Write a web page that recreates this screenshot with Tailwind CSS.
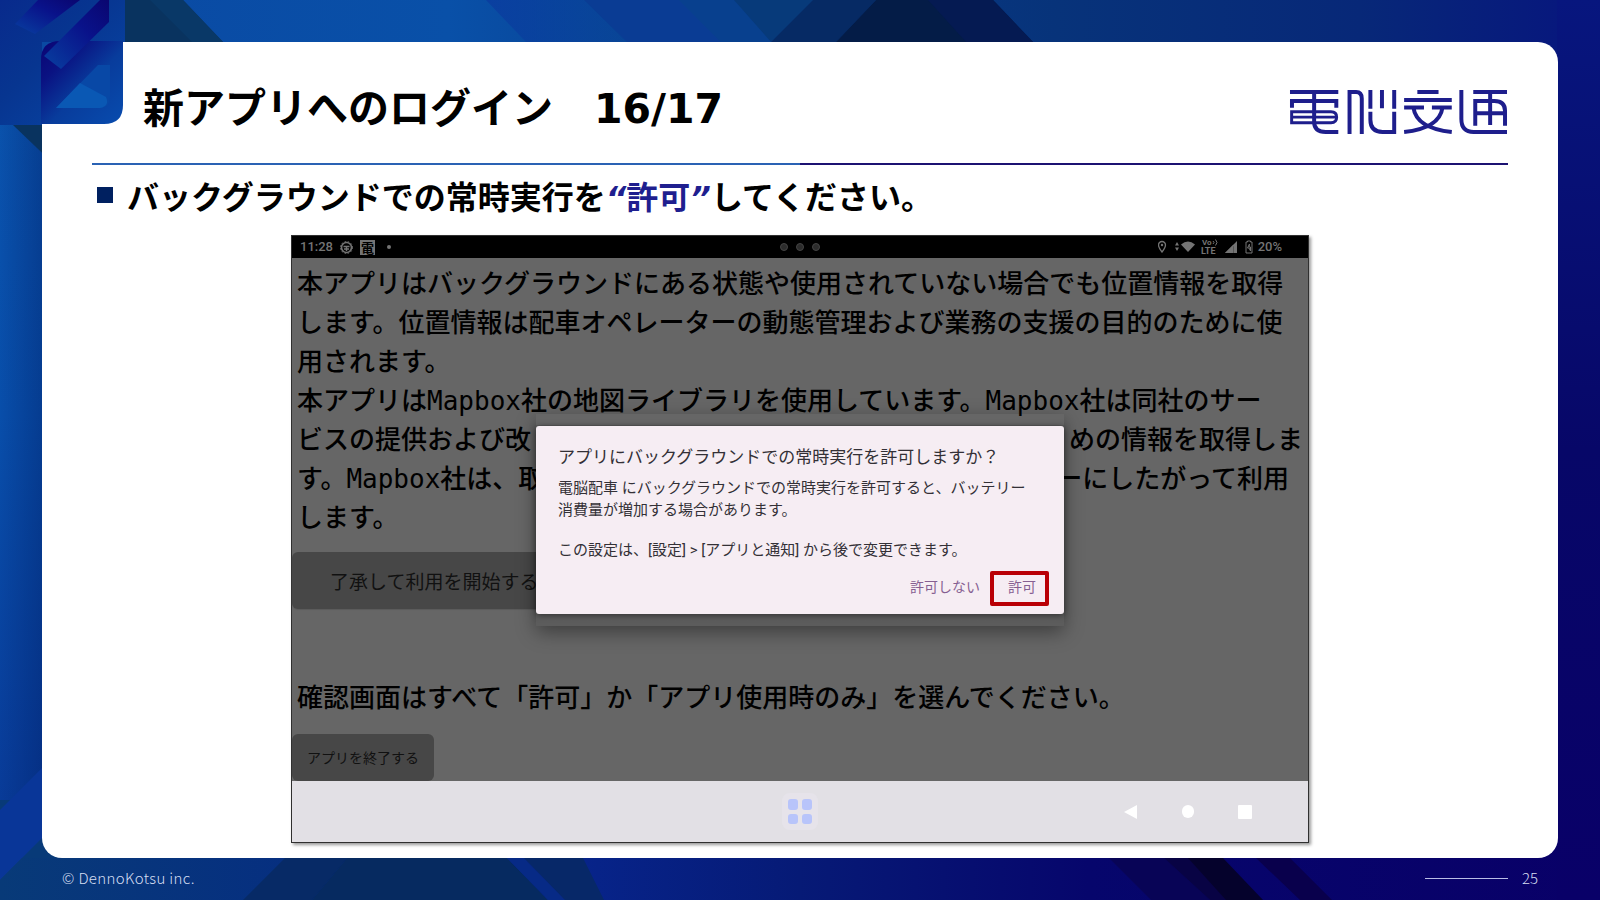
<!DOCTYPE html>
<html lang="ja">
<head>
<meta charset="UTF-8"/>
<meta name="viewport" content="width=device-width, initial-scale=1"/>
<title>新アプリへのログイン 16/17</title>
<script src="https://cdn.jsdelivr.net/npm/@tailwindcss/browser@4"></script>
</head>
<body class="relative isolate flex min-h-screen flex-col bg-[#07247c] font-['Noto_Sans_CJK_JP',sans-serif] text-black">

<!-- backdrop -->
<svg class="absolute inset-0 -z-10 h-full w-full" viewBox="0 0 1600 900" preserveAspectRatio="none" aria-hidden="true">
  <defs>
    <linearGradient id="top" x1="0" x2="1"><stop offset="0" stop-color="#0a48a2"/><stop offset=".28" stop-color="#0950a8"/><stop offset=".5" stop-color="#083a85"/><stop offset=".66" stop-color="#07337a"/><stop offset=".85" stop-color="#072878"/><stop offset="1" stop-color="#07157e"/></linearGradient>
    <linearGradient id="left" x1="0" x2="0" y1="0" y2="1"><stop offset="0" stop-color="#0a52ac"/><stop offset=".45" stop-color="#084eaa"/><stop offset="1" stop-color="#083b98"/></linearGradient>
    <linearGradient id="right" x1="0" x2="0" y1="0" y2="1"><stop offset="0" stop-color="#07167e"/><stop offset=".5" stop-color="#070768"/><stop offset="1" stop-color="#090068"/></linearGradient>
    <linearGradient id="bottom" x1="0" x2="1"><stop offset="0" stop-color="#083a78"/><stop offset=".17" stop-color="#06307f"/><stop offset=".36" stop-color="#07248a"/><stop offset=".5" stop-color="#061a76"/><stop offset=".68" stop-color="#06066c"/><stop offset="1" stop-color="#090068"/></linearGradient>
    <linearGradient id="band" x1="0" x2="1"><stop offset="0" stop-color="#0a3fa0"/><stop offset="1" stop-color="#083a98" stop-opacity="0"/></linearGradient>
    <linearGradient id="side" x1="0" x2="1"><stop offset="0" stop-color="#001a60" stop-opacity="0"/><stop offset="1" stop-color="#001a60" stop-opacity=".35"/></linearGradient>
    <linearGradient id="teal" x1="0" x2="1"><stop offset="0" stop-color="#083a78"/><stop offset="1" stop-color="#062f80"/></linearGradient>
  </defs>
  <rect width="1600" height="450" fill="url(#top)"/>
  <rect y="450" width="1600" height="450" fill="url(#bottom)"/>
  <rect y="100" width="300" height="700" fill="url(#left)"/>
  <rect x="1557" width="43" height="900" fill="url(#right)"/>
  <!-- top edge facets -->
  <path d="M125 0H183L223 42H125Z" fill="#09335f"/>
  <path d="M150 0H183L223 42H192Z" fill="#093867"/>
  <path d="M486 0H584L627 42H526Z" fill="url(#band)"/>
  <path d="M584 0H679L721 42H627Z" fill="#0a3c94"/>
  <path d="M679 0H734L777 42H721Z" fill="#08408e"/>
  <path d="M734 0H813L771 42Z" fill="#073a7a"/>
  <path d="M813 0H876L836 42H771Z" fill="#062a64"/>
  <path d="M876 0H993L1033 42H836Z" fill="#041c47"/>
  <path d="M928 0H993L1033 42H966Z" fill="#051a52"/>
  <!-- left edge facets -->
  <rect x="0" y="100" width="42" height="700" fill="url(#side)"/>
  <path d="M13 125H60V170Z" fill="#09335f"/>
  <path d="M0 810L60 750V900H0Z" fill="#093698"/>
  <path d="M0 880L60 820V900H0Z" fill="#083a78"/>
  <!-- bottom edge facets -->
  <path d="M0 880L22 858H285L243 900H0Z" fill="url(#teal)"/>
  <path d="M285 858H347L312 900H243Z" fill="#072a66"/>
  <path d="M347 858H507L548 900H312Z" fill="#062a60"/>
  <path d="M507 858H524L565 900H548Z" fill="#072a86"/>
  <path d="M524 858H583L604 900H565Z" fill="#072868"/>
  <path d="M1109 858H1164L1210 900H1151Z" fill="#080456"/>
  <path d="M1164 858H1193L1231 900H1210Z" fill="#080344"/>
  <path d="M1188 858H1223L1263 900H1226Z" fill="#05022c"/>
  <path d="M1256 858H1290L1332 900H1300Z" fill="#09004c"/>
</svg>

<!-- slide -->
<main class="relative mx-[42px] mt-[42px] grow rounded-[20px] bg-white px-[50px] pb-[15px]">
  <header class="flex items-end justify-between pt-[42px] pb-[29px] pl-[51px]">
    <h1 class="text-[41px] leading-[50px] font-bold font-['DejaVu_Sans','Noto_Sans_CJK_JP',sans-serif]">新アプリへのログイン　16/17</h1>
    <svg class="h-11 w-[219px]" viewBox="0 0 656 133" fill="none" stroke="#1e1e8c" stroke-width="12" role="img" aria-label="電脳交通">
      <path d="M0 6H146M6 54V33H140V54M73 0V96Q73 127 108 127H146"/>
      <path d="M5 66H124Q141 66 141 82T124 99H5ZM5 82H138" stroke-width="9"/>
      <path d="M180 133V6H200Q217 6 217 26V133M243 0V57M278 0V55M315 0V57M243 66V90Q243 127 280 127H315V66"/>
      <path d="M385 6H449M345 30H489M345 53H405M429 53H489M373 53Q382 116 489 127M461 53Q452 116 345 127"/>
      <path d="M518 0V88Q518 127 555 127H656M554 6H656M560 108V33H618Q650 33 650 63V108M605 6V106M560 70H650"/>
    </svg>
  </header>
  <div class="h-[2px] bg-linear-to-r from-[#2a62b4] from-50% to-[#1c1272] to-50%"></div>

  <ul class="pt-[6px] pb-4">
    <li class="flex h-12 items-center gap-[14px] pl-[5px] text-[32px] leading-[48px] font-bold">
      <span class="size-4 bg-[#002060]"></span>
      <span>バックグラウンドでの常時実行を<em class="text-[#1f1f8f] not-italic"><i class="font-['DejaVu_Sans',sans-serif] leading-none">“</i>許可<i class="font-['DejaVu_Sans',sans-serif] leading-none">”</i></em>してください。</span>
    </li>
  </ul>

  <!-- tablet screen -->
  <section class="relative mx-auto max-w-[1018px] border border-[#303030] bg-[#666] shadow-[2px_2px_3px_rgba(0,0,0,0.4)]">
    <div class="grid h-[22px] grid-cols-3 items-center bg-black px-[8px] font-[Roboto,sans-serif] text-[13px] font-medium text-[#747474]">
      <div class="flex items-center gap-[7px]">
        <span>11:28</span>
        <svg class="size-[13px]" viewBox="0 0 13 13" fill="none" stroke="currentColor"><circle cx="6.5" cy="6.5" r="5" stroke-width="1.6"/><circle cx="6.5" cy="6.5" r="6" stroke-dasharray="1.6 1.6"/><path d="M3.5 5.5H9.5M6.5 6V10M4 8H9" stroke-width="1.4"/></svg>
        <span class="flex size-[15px] items-center justify-center bg-[#747474] font-['Noto_Sans_CJK_JP',sans-serif] text-[13px] leading-none font-bold text-black">電</span>
        <span class="ml-[5px] size-1 rounded-full bg-[#747474]"></span>
      </div>
      <div class="flex justify-center gap-2">
        <span class="size-2 rounded-full border border-[#444] bg-[#2c2c2c]"></span>
        <span class="size-2 rounded-full border border-[#444] bg-[#2c2c2c]"></span>
        <span class="size-2 rounded-full border border-[#444] bg-[#2c2c2c]"></span>
      </div>
      <div class="flex items-center justify-end pr-[18px]">
        <svg class="h-[16px] w-[97px]" viewBox="0 -1 97 16" fill="currentColor" aria-hidden="true">
          <path d="M4 1.500a3.500 3.500 0 0 1 3.500 3.500c0 2.600-3.500 7-3.500 7S.5 7.600 .5 5a3.500 3.500 0 0 1 3.500-3.500Z" fill="none" stroke="currentColor" stroke-width="1.300"/><circle cx="4" cy="5" r="1.200"/>
          <path d="M19 2L21 5.500H17ZM19 11L17 7.500H21Z"/>
          <path d="M23 4.500Q30 -1.500 37 4.500L30 12Z"/>
          <text x="44" y="5" font-size="8" font-weight="700">Vo</text><path d="M55 1q2 1.500 0 3M57.500 -.5q3 3 0 6" fill="none" stroke="currentColor"/>
          <text x="43" y="14" font-size="9" font-weight="700">LTE</text>
          <path d="M67 13L79 1V13H75.500V6L68.500 13Z"/><path d="M67 13L75.500 4.500V13Z"/>
          <path d="M88 2H89.500V1H92.500V2H94V13H88ZM91.500 4L89.500 8H91L92.500 11V7H91Z" fill="none" stroke="currentColor"/>
        </svg>
        <span class="ml-[3px]">20%</span>
      </div>
    </div>

    <div class="pt-1 text-[26px] leading-[39px] font-medium">
      <div class="px-[5px] whitespace-nowrap">
        <p>本アプリはバックグラウンドにある状態や使用されていない場合でも位置情報を取得<br>します。位置情報は配車オペレーターの動態管理および業務の支援の目的のために使<br>用されます。</p>
        <p>本アプリは<span class="font-['DejaVu_Sans_Mono',monospace] leading-none">Mapbox</span>社の地図ライブラリを使用しています。<span class="font-['DejaVu_Sans_Mono',monospace] leading-none">Mapbox</span>社は同社のサー</p>
        <p class="flex justify-between"><span>ビスの提供および改</span><span>めの情報を取得しま</span></p>
        <p class="flex justify-between pr-[14px]"><span>す。<span class="font-['DejaVu_Sans_Mono',monospace] leading-none">Mapbox</span>社は、取</span><span>ーにしたがって利用</span></p>
        <p>します。</p>
      </div>
      <button type="button" class="mt-[17px] block h-[57px] rounded-md bg-[#474747] pr-[40px] pl-[38px] text-[19px] font-normal text-[#111] shadow-[0_1px_1px_#5a5a5a]">了承して利用を開始する</button>
      <p class="mt-[67px] px-[5px]">確認画面はすべて「許可」か「アプリ使用時のみ」を選んでください。</p>
      <button type="button" class="mt-[19px] block h-[47px] rounded-md bg-[#474747] px-[15px] text-[14px] font-normal text-[#111]">アプリを終了する</button>
    </div>

    <nav class="grid h-[61px] grid-cols-3 items-center bg-[#e2e0e5]">
      <button type="button" aria-label="アプリ一覧" class="col-start-2 mx-auto grid h-[37px] w-9 grid-cols-2 gap-1 rounded-lg bg-[#e6e3ea] p-[6px]">
        <span class="rounded-[3px] bg-[#b8c4fa]"></span><span class="rounded-[3px] bg-[#b8c4fa]"></span>
        <span class="rounded-[3px] bg-[#b8c4fa]"></span><span class="rounded-[3px] bg-[#b8c4fa]"></span>
      </button>
      <div class="flex items-center justify-end gap-11 pr-14">
        <button type="button" aria-label="戻る"><svg class="h-[14px] w-[14px]" viewBox="0 0 14 14" fill="#fff"><path d="M0 7L13 0V14Z"/></svg></button>
        <button type="button" aria-label="ホーム" class="h-[13px] w-3 rounded-full bg-white"></button>
        <button type="button" aria-label="履歴" class="size-[14px] rounded-[1px] bg-white"></button>
      </div>
    </nav>

    <!-- permission dialog, with the window shadow below it -->
    <div class="absolute top-[178px] left-1/2 w-[528px] -translate-x-1/2 bg-linear-to-b from-transparent from-5% to-[#5c5c5c] to-5% py-3 shadow-[0_6px_18px_rgba(0,0,0,0.4)]">
      <div role="dialog" aria-labelledby="ask" class="rounded-[3px] bg-[#f6edf3] pt-[19px] pr-[15px] pb-2 pl-[22px] font-[Roboto,'Noto_Sans_CJK_JP',sans-serif] text-[15px] leading-[22px] text-[#333036] shadow-[0_1px_6px_rgba(0,0,0,0.5)]">
        <h2 id="ask" class="mb-2 text-[17px] leading-6">アプリにバックグラウンドでの常時実行を許可しますか？</h2>
        <p>電脳配車 にバックグラウンドでの常時実行を許可すると、バッテリー<br>消費量が増加する場合があります。</p>
        <p class="mt-[18px]">この設定は、[設定] &gt; [アプリと通知] から後で変更できます。</p>
        <div class="mt-[10px] flex items-center justify-end gap-[10px] text-[14px] text-[#865f92]">
          <button type="button" class="h-[35px] pb-1">許可しない</button>
          <button type="button" class="h-[35px] rounded-[2px] border-4 border-[#b90006] pr-[9px] pb-1 pl-[14px]">許可</button>
        </div>
      </div>
    </div>
  </section>
</main>

<footer class="flex h-[42px] items-center justify-between px-[62px] pb-[2px] text-[15px] font-light text-[#d5def2]">
  <small class="text-[15px] tracking-wide">© DennoKotsu inc.</small>
  <div class="flex items-center gap-[14px]"><span class="h-px w-[83px] bg-[#b9bde6]"></span><span>25</span></div>
</footer>

<!-- corner emblem -->
<svg class="absolute top-0 left-0 size-[125px]" viewBox="0 0 125 125" aria-hidden="true">
  <defs>
    <linearGradient id="sq" x1="0" x2="1" y1="0" y2="1"><stop offset="0" stop-color="#082a8c"/><stop offset=".4" stop-color="#073590"/><stop offset="1" stop-color="#0848a8"/></linearGradient>
    <linearGradient id="bar" x1="1" x2="0" y1="0" y2="1"><stop offset="0" stop-color="#0a0670"/><stop offset=".4" stop-color="#09128a"/><stop offset="1" stop-color="#0840a0"/></linearGradient>
    <linearGradient id="tile" x1="0" x2="1" y1="0" y2="1"><stop offset="0" stop-color="#0a0474"/><stop offset=".25" stop-color="#0a1282"/><stop offset=".55" stop-color="#083c9c"/><stop offset="1" stop-color="#084cae"/></linearGradient>
  </defs>
  <path d="M0 0H125V42H42V125H0Z" fill="url(#sq)"/>
  <path d="M48 0H80L35 34L15 24L38 0Z" fill="url(#bar)"/>
  <path d="M41 60Q41 41 60 41H123V105Q123 124 104 124H41Z" fill="url(#tile)"/>
  <path d="M98 65L56 108H100Q110 108 110 96V65Z" fill="#0848a6"/>
  <path d="M80 83L106 97Q110 106 100 108H56Z" fill="#0a58b4"/>
  <path d="M100 0H109V22L61 69L44 56Z" fill="url(#bar)"/>
</svg>
</body>
</html>
